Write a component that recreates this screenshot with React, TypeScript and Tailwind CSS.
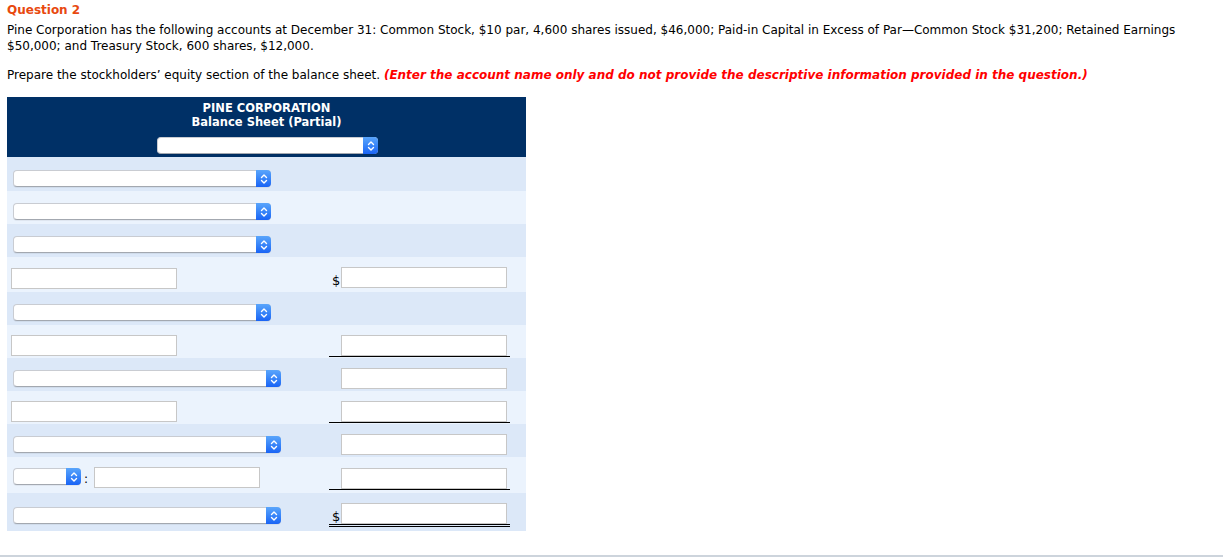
import React from "react";

const font = { fontFamily: '"DejaVu Sans", Verdana, sans-serif' };

function MacSelect({ w }: { w: number }) {
  return (
    <div
      className="relative flex h-[17px] rounded-[4px] bg-white border border-[#c9ccd2] border-b-[#a3a8b0] shadow-[0_1px_0_rgba(0,0,0,0.05)]"
      style={{ width: w }}
    >
      <div className="flex-1" />
      <div className="w-[15px] -my-px -mr-px rounded-r-[4px] bg-gradient-to-b from-[#5aa5fb] to-[#1a63f5] flex items-center justify-center">
        <svg width="8" height="12" viewBox="0 0 8 12" fill="none" stroke="white" strokeWidth="1.4" strokeLinecap="round" strokeLinejoin="round">
          <path d="M1.5 4.5 L4 2 L6.5 4.5" />
          <path d="M1.5 7.5 L4 10 L6.5 7.5" />
        </svg>
      </div>
    </div>
  );
}

function TextBox({ w }: { w: number }) {
  return <div className="h-[21px] bg-white border border-[#c7c7c7]" style={{ width: w }} />;
}

type RightKind = "none" | "plain" | "dollar" | "under" | "dollarDouble";

function Right({ kind, pt }: { kind: RightKind; pt: number }) {
  if (kind === "none") return null;
  const dollar = kind === "dollar" || kind === "dollarDouble";
  const border =
    kind === "under" ? "border-b border-black" : kind === "dollarDouble" ? "border-b-[3px] border-double border-black" : "";
  return (
    <div className="w-[181px]" style={{ paddingTop: pt }}>
      <div className={`flex items-end w-[181px] ${border}`}>
        <span className="w-[12px] text-[13px] leading-[15px] text-black pl-[3px]">{dollar ? "$" : ""}</span>
        <TextBox w={166} />
      </div>
    </div>
  );
}

function Row({
  h,
  bg,
  left,
  leftPt,
  right,
  rightPt = 10,
}: {
  h: number;
  bg: string;
  left: React.ReactNode;
  leftPt: number;
  right: RightKind;
  rightPt?: number;
}) {
  return (
    <div className={`flex ${bg}`} style={{ height: h }}>
      <div className="w-[322px]" style={{ paddingTop: leftPt }}>
        {left}
      </div>
      <Right kind={right} pt={rightPt} />
    </div>
  );
}

export default function App() {
  const dark = "bg-[#dce8f8]";
  const light = "bg-[#ebf3fd]";
  return (
    <div className="w-[1223px] h-[557px] bg-white relative text-black" style={font}>
      <div className="pl-[7px] pr-[20px] pt-[2px] text-[12px] leading-[16px]">
        <div className="font-bold text-[#e8490f]">Question 2</div>
        <p className="mt-[4px] w-[1200px]">
          Pine Corporation has the following accounts at December 31: Common Stock, $10 par, 4,600 shares issued, $46,000; Paid-in Capital in Excess of Par—Common Stock $31,200; Retained Earnings $50,000; and Treasury Stock, 600 shares, $12,000.
        </p>
        <p className="mt-[13px]">
          Prepare the stockholders’ equity section of the balance sheet.{" "}
          <span className="font-bold italic text-[#ff0000]">
            (Enter the account name only and do not provide the descriptive information provided in the question.)
          </span>
        </p>
      </div>

      <div className="ml-[7px] mt-[14px] w-[519px]">
        <div className="h-[60px] bg-[#003066] flex flex-col items-center pt-[4px] text-white font-bold text-[11.5px] leading-[14px]">
          <div>PINE CORPORATION</div>
          <div>Balance Sheet (Partial)</div>
          <div className="mt-[8px] ml-[2px]">
            <MacSelect w={221} />
          </div>
        </div>

        <Row h={34} bg={dark} leftPt={13} left={<div className="pl-[6px]"><MacSelect w={258} /></div>} right="none" />
        <Row h={33} bg={light} leftPt={12} left={<div className="pl-[6px]"><MacSelect w={258} /></div>} right="none" />
        <Row h={33} bg={dark} leftPt={12} left={<div className="pl-[6px]"><MacSelect w={258} /></div>} right="none" />
        <Row h={35} bg={light} leftPt={11} left={<div className="pl-[4px]"><TextBox w={166} /></div>} right="dollar" rightPt={10} />
        <Row h={33} bg={dark} leftPt={12} left={<div className="pl-[6px]"><MacSelect w={258} /></div>} right="none" />
        <Row h={33} bg={light} leftPt={10} left={<div className="pl-[4px]"><TextBox w={166} /></div>} right="under" rightPt={10} />
        <Row h={33} bg={dark} leftPt={12} left={<div className="pl-[6px]"><MacSelect w={268} /></div>} right="plain" rightPt={10} />
        <Row h={33} bg={light} leftPt={10} left={<div className="pl-[4px]"><TextBox w={166} /></div>} right="under" rightPt={10} />
        <Row h={33} bg={dark} leftPt={12} left={<div className="pl-[6px]"><MacSelect w={268} /></div>} right="plain" rightPt={10} />
        <Row
          h={36}
          bg={light}
          leftPt={11}
          left={
            <div className="pl-[6px] flex items-start">
              <MacSelect w={68} />
              <span className="mt-[4px] ml-[3px] w-[10px] text-[12px] leading-[14px]">:</span>
              <div className="-mt-px">
                <TextBox w={166} />
              </div>
            </div>
          }
          right="under"
          rightPt={11}
        />
        <Row h={38} bg={dark} leftPt={14} left={<div className="pl-[6px]"><MacSelect w={268} /></div>} right="dollarDouble" rightPt={10} />
      </div>

      <div className="absolute left-0 right-0 top-[555px] h-[2px] bg-[#cdd4dc]" />
    </div>
  );
}
